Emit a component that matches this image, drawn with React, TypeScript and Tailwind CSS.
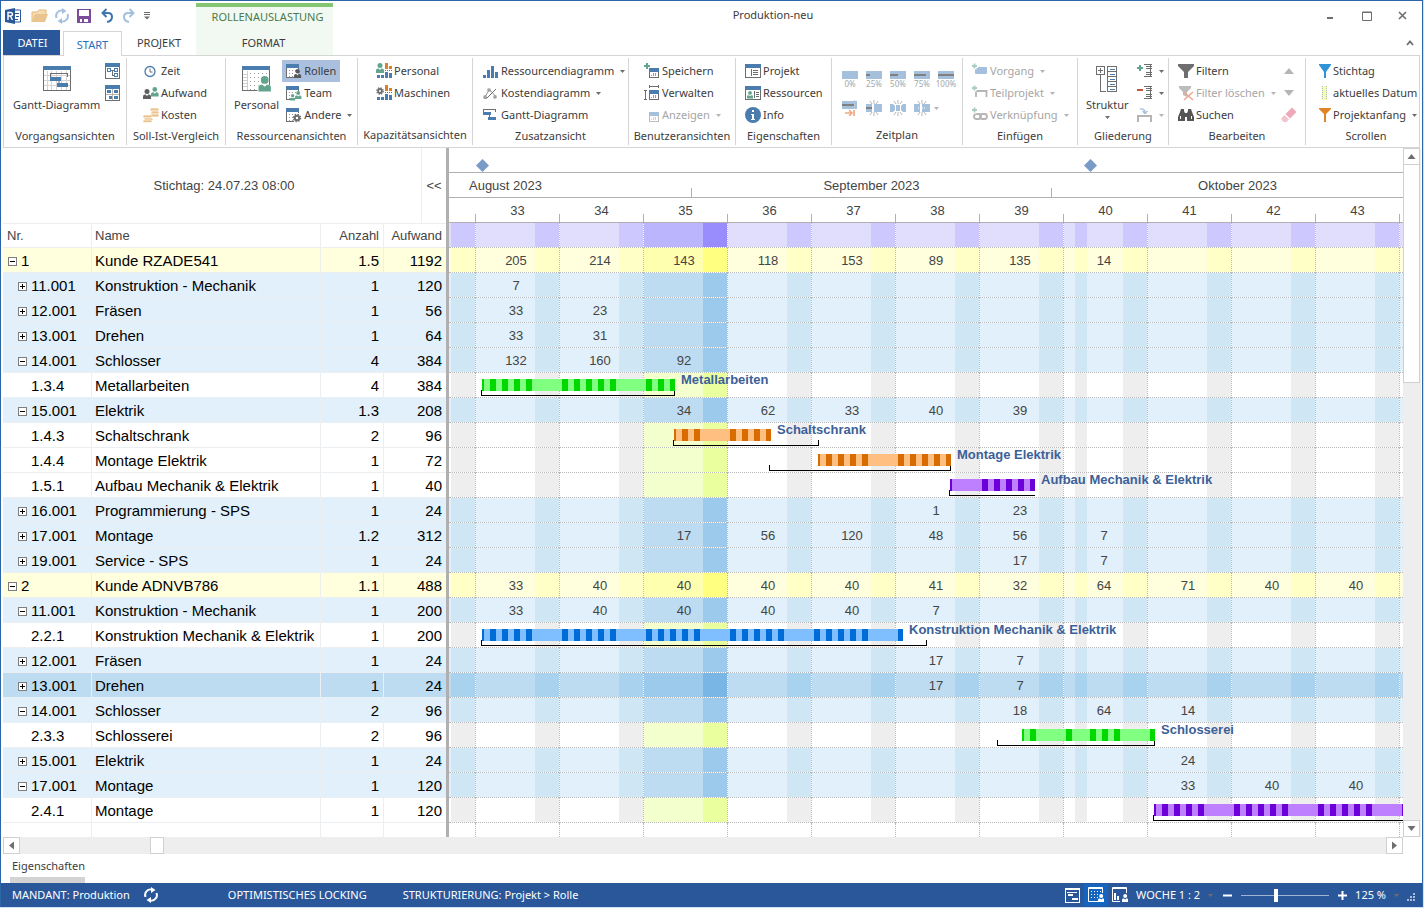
import type { ReactNode } from 'react'
import clsx from 'clsx'

const BLUE = '#4a7dae'
const PALE = '#a5c0dc'
const GRAY = '#6e6e6e'
const GREEN = '#62a58c'
const ORANGE = '#d98128'

// ---------- data ----------

type RowKind = 'sum' | 'role' | 'task' | 'selected'

interface Bar {
  from: number
  to: number
  planFrom: number
  planTo: number
  openEnd?: boolean
  light: string
  dark: string
}

interface PlanRow {
  nr: string
  name: string
  count: string
  effort: number
  kind: RowKind
  open?: boolean
  weeks?: Record<number, number>
  bar?: Bar
}

const LIME = { light: '#80ff80', dark: '#00d800' }
const AMBER = { light: '#ffbf80', dark: '#d86c00' }
const VIOLET = { light: '#bf80ff', dark: '#6c00d8' }
const AZURE = { light: '#80bfff', dark: '#006cd8' }

// bar positions are pixels from the left edge of the time axis, 12px per day
const rows: PlanRow[] = [
  { nr: '1', name: 'Kunde RZADE541', count: '1.5', effort: 1192, kind: 'sum', open: true, weeks: { 33: 205, 34: 214, 35: 143, 36: 118, 37: 153, 38: 89, 39: 135, 40: 14 } },
  { nr: '11.001', name: 'Konstruktion - Mechanik', count: '1', effort: 120, kind: 'role', weeks: { 33: 7 } },
  { nr: '12.001', name: 'Fräsen', count: '1', effort: 56, kind: 'role', weeks: { 33: 33, 34: 23 } },
  { nr: '13.001', name: 'Drehen', count: '1', effort: 64, kind: 'role', weeks: { 33: 33, 34: 31 } },
  { nr: '14.001', name: 'Schlosser', count: '4', effort: 384, kind: 'role', open: true, weeks: { 33: 132, 34: 160, 35: 92 } },
  { nr: '1.3.4', name: 'Metallarbeiten', count: '4', effort: 384, kind: 'task', bar: { from: 33, to: 226, planFrom: 32, planTo: 226, ...LIME } },
  { nr: '15.001', name: 'Elektrik', count: '1.3', effort: 208, kind: 'role', open: true, weeks: { 35: 34, 36: 62, 37: 33, 38: 40, 39: 39 } },
  { nr: '1.4.3', name: 'Schaltschrank', count: '2', effort: 96, kind: 'task', bar: { from: 225, to: 322, planFrom: 224, planTo: 370, ...AMBER } },
  { nr: '1.4.4', name: 'Montage Elektrik', count: '1', effort: 72, kind: 'task', bar: { from: 369, to: 502, planFrom: 320, planTo: 502, ...AMBER } },
  { nr: '1.5.1', name: 'Aufbau Mechanik & Elektrik', count: '1', effort: 40, kind: 'task', bar: { from: 501, to: 586, planFrom: 500, planTo: 586, openEnd: true, ...VIOLET } },
  { nr: '16.001', name: 'Programmierung - SPS', count: '1', effort: 24, kind: 'role', weeks: { 38: 1, 39: 23 } },
  { nr: '17.001', name: 'Montage', count: '1.2', effort: 312, kind: 'role', weeks: { 35: 17, 36: 56, 37: 120, 38: 48, 39: 56, 40: 7 } },
  { nr: '19.001', name: 'Service - SPS', count: '1', effort: 24, kind: 'role', weeks: { 39: 17, 40: 7 } },
  { nr: '2', name: 'Kunde ADNVB786', count: '1.1', effort: 488, kind: 'sum', open: true, weeks: { 33: 33, 34: 40, 35: 40, 36: 40, 37: 40, 38: 41, 39: 32, 40: 64, 41: 71, 42: 40, 43: 40 } },
  { nr: '11.001', name: 'Konstruktion - Mechanik', count: '1', effort: 200, kind: 'role', open: true, weeks: { 33: 33, 34: 40, 35: 40, 36: 40, 37: 40, 38: 7 } },
  { nr: '2.2.1', name: 'Konstruktion Mechanik & Elektrik', count: '1', effort: 200, kind: 'task', bar: { from: 33, to: 454, planFrom: 32, planTo: 478, ...AZURE } },
  { nr: '12.001', name: 'Fräsen', count: '1', effort: 24, kind: 'role', weeks: { 38: 17, 39: 7 } },
  { nr: '13.001', name: 'Drehen', count: '1', effort: 24, kind: 'selected', weeks: { 38: 17, 39: 7 } },
  { nr: '14.001', name: 'Schlosser', count: '2', effort: 96, kind: 'role', open: true, weeks: { 39: 18, 40: 64, 41: 14 } },
  { nr: '2.3.3', name: 'Schlosserei', count: '2', effort: 96, kind: 'task', bar: { from: 573, to: 706, planFrom: 548, planTo: 706, ...LIME } },
  { nr: '15.001', name: 'Elektrik', count: '1', effort: 24, kind: 'role', weeks: { 41: 24 } },
  { nr: '17.001', name: 'Montage', count: '1', effort: 120, kind: 'role', open: true, weeks: { 41: 33, 42: 40, 43: 40 } },
  { nr: '2.4.1', name: 'Montage', count: '1', effort: 120, kind: 'task', bar: { from: 705, to: 1034, planFrom: 704, planTo: 1034, openEnd: true, ...VIOLET } },
]

const WEEKS = [33, 34, 35, 36, 37, 38, 39, 40, 41, 42, 43]
const CURRENT_WEEK = 35
const HOLIDAY_WEEK = 40
const AXIS_START = 26
const AXIS_END = 950
const ROW_H = 25

// ---------- small drawings ----------

function Icon({ w = 16, h = 16, children }: { w?: number; h?: number; children: ReactNode }) {
  return (
    <svg width={w} height={h} viewBox={`0 0 ${w} ${h}`} fill="none" className="shrink-0" aria-hidden="true">
      {children}
    </svg>
  )
}

function Person({ x, y, color, s = 1 }: { x: number; y: number; color: string; s?: number }) {
  return (
    <g transform={`translate(${x} ${y}) scale(${s})`} fill={color}>
      <circle cx="4" cy="2.5" r="2.5" />
      <path d="M0 10V7.4Q0 5.6 2 5.6H2.6L4 7L5.4 5.6H6Q8 5.6 8 7.4V10Z" />
    </g>
  )
}

function Gear({ cx, cy, r, color }: { cx: number; cy: number; r: number; color: string }) {
  return (
    <g stroke={color}>
      <circle cx={cx} cy={cy} r={r * 0.55} strokeWidth={r * 0.5} />
      <circle cx={cx} cy={cy} r={r * 0.9} strokeWidth={r * 0.35} strokeDasharray={`${r * 0.36} ${r * 0.347}`} />
    </g>
  )
}

const Caret = ({ pale, className }: { pale?: boolean; className?: string }) => (
  <svg width="5" height="3" viewBox="0 0 5 3" className={clsx('shrink-0', className)} aria-hidden="true">
    <path d="M0 0H5L2.5 3Z" fill={pale ? '#b5b5b5' : GRAY} />
  </svg>
)

function WindowFrame({ w = 15, h = 15, x = 0, y = 0 }: { w?: number; h?: number; x?: number; y?: number }) {
  return (
    <g shapeRendering="crispEdges">
      <rect x={x + 0.5} y={y + 0.5} width={w - 1} height={h - 1} fill="#fff" stroke={GRAY} />
      <rect x={x} y={y} width={w} height={4} fill={BLUE} />
    </g>
  )
}

const GanttBig = () => (
  <Icon w={28} h={26}>
    <WindowFrame w={28} h={25} />
    <path d="M4.5 5V24M8.5 5V24M13.5 5V24M18.5 5V24M23.5 5V24M1 9.5H27M1 14.5H27M1 19.5H27" stroke="#d4d4d4" shapeRendering="crispEdges" />
    <path d="M7.5 11V7.5H24.5V11" stroke={GRAY} shapeRendering="crispEdges" />
    <rect x="7" y="11" width="11" height="4" fill={BLUE} />
    <rect x="14" y="17" width="11" height="4" fill={BLUE} />
    <path d="M16 15V17" stroke={GRAY} />
  </Icon>
)

const NetIcon = () => (
  <Icon w={15} h={16}>
    <WindowFrame h={16} />
    <g stroke={BLUE} shapeRendering="crispEdges">
      <path d="M6 7.5H9M7.5 8V12.5H9" stroke={GRAY} />
      <rect x="2.5" y="5.5" width="3" height="3" />
      <rect x="9.5" y="5.5" width="3" height="3" />
      <rect x="9.5" y="10.5" width="3" height="3" />
    </g>
  </Icon>
)

const BoardIcon = () => (
  <Icon w={15} h={16}>
    <WindowFrame h={16} />
    <g fill={BLUE} shapeRendering="crispEdges">
      <path d="M1 9.5H14M7.5 4V15" stroke="#b5b5b5" />
      <rect x="2" y="5" width="4" height="3" />
      <rect x="9" y="5" width="4" height="3" />
      <rect x="4" y="11" width="3" height="3" />
      <rect x="9" y="11" width="4" height="3" />
    </g>
  </Icon>
)

const ClockIcon = () => (
  <Icon>
    <circle cx="7" cy="8.5" r="5" stroke={BLUE} strokeWidth="1.300" />
    <path d="M7 5.5V9H9.500" stroke={GRAY} />
  </Icon>
)

const PeopleIcon = () => (
  <Icon>
    <Person x={8} y={2} color={GREEN} s={0.95} />
    <Person x={0} y={4} color="#5f5f5f" s={1} />
  </Icon>
)

const CoinsIcon = () => (
  <Icon>
    <g fill="#eac48e" stroke="#fff" strokeWidth="0.600">
      <rect x="7" y="1" width="9" height="3" rx="1.500" />
      <rect x="8" y="4" width="8" height="3" rx="1.500" />
      <rect x="7" y="7" width="9" height="3" rx="1.500" />
      <rect x="0" y="8" width="9" height="3" rx="1.500" />
      <rect x="1" y="11" width="9" height="2.500" rx="1.200" />
      <rect x="0" y="13" width="9" height="2.500" rx="1.200" />
    </g>
  </Icon>
)

const PersonalBig = () => (
  <Icon w={30} h={26}>
    <WindowFrame w={28} h={25} />
    <g stroke="#9a9a9a" shapeRendering="crispEdges">
      <path d="M5.5 5V24M1 8.5H5M1 11.5H5M1 14.5H5M1 17.5H5M1 20.5H5" stroke="#cfcfcf" />
      <path d="M8.5 7V24M12.5 7V24M16.5 7V24M20.5 7V24M24.5 7V24" strokeDasharray="1 3" />
    </g>
    <Person x={15.5} y={9} color="#fff" s={1.75} />
    <Person x={16.5} y={10} color={GREEN} s={1.55} />
  </Icon>
)

function CalendarWith({ children }: { children: ReactNode }) {
  return (
    <Icon>
      <g shapeRendering="crispEdges">
        <path d="M1 5H12V14H1Z" fill="#fff" />
        <path d="M0.5 3V14.5H8M12.5 4V6" stroke={GRAY} />
        <rect x="0" y="1" width="13" height="4" fill={BLUE} />
        <path d="M3.5 7V14M6.5 7V14M9.5 7V9" stroke="#9a9a9a" strokeDasharray="1 2" />
      </g>
      {children}
    </Icon>
  )
}

const CapacityBars = () => (
  <g shapeRendering="crispEdges">
    <path d="M1 12H4V15H1ZM5 12H8V15H5ZM9 9H12V15H9ZM13 10H16V15H13Z" fill={BLUE} />
    <path d="M9 0H12V6H9ZM13 3H16V6H13Z" fill={ORANGE} />
    <path d="M9 7.5H16" stroke={GRAY} strokeDasharray="1 1" />
  </g>
)

const BarsIcon = () => (
  <Icon>
    <path d="M0 12H3V15H0ZM4 7H7V15H4ZM8 3H11V15H8ZM12 9H15V15H12Z" fill={BLUE} shapeRendering="crispEdges" />
  </Icon>
)

const CurveIcon = () => (
  <Icon>
    <path d="M2 12L6 5L9 7L13 12" stroke="#9a9a9a" />
    <path d="M1 13H4L13 4" stroke={GRAY} />
    <g fill="#fff" stroke={GRAY} strokeWidth="0.800">
      <rect x="1" y="11" width="2" height="2" />
      <rect x="5" y="4" width="2" height="2" />
      <rect x="11" y="11" width="2" height="2" />
    </g>
  </Icon>
)

const GanttIcon = () => (
  <Icon>
    <g shapeRendering="crispEdges">
      <path d="M0.5 5V2.5H12.5V5" stroke={GRAY} />
      <rect x="0" y="5" width="8" height="3" fill={BLUE} />
      <rect x="5" y="10" width="8" height="3" fill={BLUE} />
      <path d="M6.5 8V10" stroke={GRAY} />
    </g>
  </Icon>
)

function ViewIcon({ mark, pale }: { mark?: 'plus' | 'size'; pale?: boolean }) {
  return (
    <Icon>
      <g shapeRendering="crispEdges">
        <rect x="5.5" y="5.5" width="9" height="9" stroke={pale ? '#bdbdbd' : GRAY} />
        <rect x="5" y="5" width="10" height="4" fill={pale ? PALE : BLUE} />
        <path d="M7.5 12V13M9.5 10V13M11.5 10V13" stroke={pale ? '#cfcfcf' : '#9a9a9a'} />
        {mark === 'plus' && <path d="M0 3H6M3 0V6" stroke={GREEN} strokeWidth="2" />}
        {mark === 'size' && <path d="M5.5 0V3M14.5 0V3M6 1.5H14M0 5.5H3M0 14.5H3M1.5 6V14" stroke={GRAY} />}
      </g>
    </Icon>
  )
}

const ProjectIcon = () => (
  <Icon>
    <WindowFrame w={16} h={14} y={1} />
    <path d="M6.5 6V13M8 7.5H13M8 9.5H13M8 11.5H13" stroke={GRAY} shapeRendering="crispEdges" />
  </Icon>
)

const ResourceIcon = () => (
  <Icon>
    <WindowFrame w={16} h={14} y={1} />
    <Person x={2} y={6} color={GREEN} s={0.75} />
    <path d="M9.5 6V13M11 7.5H14M11 9.5H14M11 11.5H14" stroke={GRAY} shapeRendering="crispEdges" />
  </Icon>
)

const InfoIcon = () => (
  <Icon>
    <circle cx="8" cy="8" r="8" fill={BLUE} />
    <path d="M7 7H9V13H7ZM7 3H9V5H7ZM6 7H8V8H6ZM6 12H10V13H6Z" fill="#fff" />
  </Icon>
)

function ProgressIcon({ value }: { value: number }) {
  return (
    <Icon w={16} h={8}>
      <g shapeRendering="crispEdges">
        <rect width="16" height="8" rx="1" fill={PALE} />
        <rect y="3" width={(16 * value) / 100} height="2" fill="#808080" />
      </g>
    </Icon>
  )
}

const SplitRays = () => (
  <path d="M8 0V4M4 1L6 4M12 1L10 4M8 12V16M4 15L6 12M12 15L10 12" stroke="#b5b5b5" />
)

function SplitIcon({ kind }: { kind: 'end' | 'split' | 'join' | 'move' }) {
  if (kind === 'end') {
    return (
      <Icon>
        <rect x="0" y="1" width="15" height="8" fill={PALE} />
        <path d="M0 5H12" stroke="#808080" strokeWidth="2" />
        <path d="M12.5 0V16" stroke="#d0d0d0" strokeDasharray="1 1" />
        <path d="M3 13H10M7 10L10 13L7 16M12 10V16" stroke="#f0a981" strokeWidth="1.600" />
      </Icon>
    )
  }
  return (
    <Icon>
      <path d={kind === 'join' ? 'M0 4H3L5 6V10L3 12H0ZM16 4H13L11 6V10L13 12H16ZM6 5H10V11H6Z' : 'M0 4H6V12H0ZM8 4H16V12H8Z'} fill={PALE} />
      {kind === 'split' && <path d="M0 8H6" stroke="#808080" strokeWidth="2" />}
      {kind === 'move' && <path d="M4 8H11" stroke="#fff" strokeDasharray="1 1" />}
      <SplitRays />
    </Icon>
  )
}

function InsertIcon({ kind }: { kind: 'task' | 'sub' | 'link' }) {
  return (
    <Icon>
      {kind === 'task' && <rect x="3" y="4" width="12" height="7" rx="1" fill={PALE} />}
      {kind === 'sub' && <path d="M4 12V6H14.500V12" stroke="#b5b5b5" strokeWidth="1.800" />}
      {kind === 'link' && (
        <g stroke="#b5b5b5" strokeWidth="1.800">
          <rect x="2" y="7" width="7" height="5" rx="2.500" />
          <rect x="8" y="7" width="7" height="5" rx="2.500" />
        </g>
      )}
      <path d="M-1 3H6M2.500 0V6.500" stroke="#fff" strokeWidth="4" />
      <path d="M0 3H5M2.500 0.500V5.500" stroke="#a9cdbf" strokeWidth="1.800" />
    </Icon>
  )
}

const StructureBig = () => (
  <Icon w={22} h={27}>
    <g stroke={GRAY} shapeRendering="crispEdges">
      <rect x="0.5" y="0.5" width="8" height="8" />
      <path d="M2 4.5H7M4.5 2V7M4.5 9V25.5H10" />
      <rect x="11.5" y="0.5" width="9" height="25" />
      <path d="M11 5.5H21M11 10.5H21M11 15.5H21M11 20.5H21" />
      <path d="M14 3.5H19M14 8.5H19M14 13.5H19M14 18.5H19M14 23.5H19" stroke={BLUE} />
    </g>
  </Icon>
)

function OutlineIcon({ kind }: { kind: 'plus' | 'minus' | 'bracket' }) {
  if (kind === 'bracket') {
    return (
      <Icon>
        <path d="M1 15V9H14V15" stroke="#b5b5b5" strokeWidth="2" />
        <path d="M3 2Q8 1 8 6M5.500 4L8 6.500L10.500 4" stroke={PALE} strokeWidth="1.400" />
      </Icon>
    )
  }
  return (
    <Icon>
      <g shapeRendering="crispEdges">
        <path d="M7 1.5H15M9 3.5H15M9 5.5H15M9 9.5H15M9 11.5H15M7 13.5H15M13.5 1V14" stroke={GRAY} />
        {kind === 'plus' ? (
          <path d="M0 5H6M3 2V8" stroke={GREEN} strokeWidth="2" />
        ) : (
          <path d="M0 5H6" stroke="#c0573c" strokeWidth="2" />
        )}
      </g>
    </Icon>
  )
}

const FilterIcon = () => (
  <Icon>
    <path d="M0 1H16V3L10 9V15H6V9L0 3Z" fill={GRAY} />
  </Icon>
)

const FilterClearIcon = () => (
  <Icon>
    <path d="M1 1H13V3L9 7V12L5 10V7L1 3Z" fill="#bcbcbc" />
    <path d="M6 7L15 15M15 7L6 15" stroke="#eda992" strokeWidth="1.600" />
  </Icon>
)

const BinocularsIcon = () => (
  <Icon>
    <g fill="#555">
      <path d="M3 2H6V4L7 6V14H0V10L2 5ZM13 2H10V4L9 6V14H16V10L14 5Z" />
      <rect x="6" y="6" width="4" height="4" />
    </g>
    <path d="M2.500 9V12M13.500 9V12" stroke="#fff" />
  </Icon>
)

const EraserIcon = () => (
  <Icon>
    <path d="M11 0.500L15.500 5L9 11.500L4.500 7Z" fill="#eda9b9" />
    <path d="M3.500 8L8 12.500L5.500 15H2.500L0.500 13V11Z" fill="#f3c4cf" />
  </Icon>
)

const Funnel = ({ color, h }: { color: string; h: number }) => (
  <Icon w={12} h={16}>
    <path d={`M0 1H12V2L7 ${h}V15H5V${h}L0 2Z`} fill={color} />
  </Icon>
)

const DateStripIcon = () => (
  <Icon w={12}>
    <rect x="3" y="1" width="5" height="14" fill="#efffb8" />
    <path d="M3.5 1V15M7.5 1V15" stroke="#b5b5b5" strokeDasharray="1 1" />
  </Icon>
)

const SyncIcon = ({ color }: { color: string }) => (
  <Icon>
    <g stroke={color} strokeWidth="1.900">
      <path d="M2.500 10A5.500 5.500 0 0 1 9 2.600" />
      <path d="M13.500 6A5.500 5.500 0 0 1 7 13.400" />
    </g>
    <path d="M8 0L12.500 3L8 6ZM8 16L3.500 13L8 10Z" fill={color} />
  </Icon>
)

// ---------- ribbon ----------

interface ToolProps {
  icon: ReactNode
  label: string
  caret?: boolean
  disabled?: boolean
  active?: boolean
}

function Tool({ icon, label, caret, disabled, active }: ToolProps) {
  return (
    <button
      type="button"
      disabled={disabled}
      className={clsx(
        'flex h-[22px] items-center gap-[2px] self-start whitespace-nowrap px-1',
        disabled ? 'text-[#a6a6a6]' : 'text-[#3c3c3c]',
        active && 'bg-[#abc0df]',
      )}
    >
      {icon}
      <span>{label}</span>
      {caret && <Caret pale={disabled} className="ml-1" />}
    </button>
  )
}

function BigTool({ icon, label, caret }: ToolProps) {
  return (
    <button type="button" className="flex h-[66px] flex-col items-center whitespace-nowrap pt-[6px] text-[#3c3c3c]">
      <span className="flex h-[30px] items-start">{icon}</span>
      <span className="leading-[18px]">{label}</span>
      {caret && <Caret className="mt-[2px]" />}
    </button>
  )
}

function Group({ title, className, children }: { title: string; className: string; children: ReactNode }) {
  return (
    <section className={clsx('flex shrink-0 flex-col', className)}>
      <div className="my-[2px] flex h-[87px] flex-col border-r border-[#d5d5d5]">
        <div className="flex h-[68px] items-start pt-[2px]">{children}</div>
        <h2 className="whitespace-nowrap text-center leading-[20px] text-[#3c3c3c]">{title}</h2>
      </div>
    </section>
  )
}

const Stack = ({ className, children }: { className?: string; children: ReactNode }) => (
  <div className={clsx('flex flex-col', className)}>{children}</div>
)

function Ribbon() {
  return (
    <div className="mx-[2px] flex h-[93px] overflow-hidden border border-[#d5d5d5]">
      <Group title="Vorgangsansichten" className="w-[123px]">
        <div className="ml-[9px]">
          <BigTool icon={<GanttBig />} label="Gantt-Diagramm" />
        </div>
        <div className="ml-[5px] flex flex-col gap-[6px] pt-[3px]">
          <button type="button" aria-label="Netzplan"><NetIcon /></button>
          <button type="button" aria-label="Tafel"><BoardIcon /></button>
        </div>
      </Group>
      <Group title="Soll-Ist-Vergleich" className="w-[99px]">
        <Stack className="ml-3">
          <Tool icon={<ClockIcon />} label="Zeit" />
          <Tool icon={<PeopleIcon />} label="Aufwand" />
          <Tool icon={<CoinsIcon />} label="Kosten" />
        </Stack>
      </Group>
      <Group title="Ressourcenansichten" className="w-[132px]">
        <div className="ml-2">
          <BigTool icon={<PersonalBig />} label="Personal" />
        </div>
        <Stack className="ml-[3px]">
          <Tool
            active
            icon={
              <CalendarWith>
                <Person x={8} y={6} color="#5a5a5a" s={0.9} />
              </CalendarWith>
            }
            label="Rollen"
          />
          <Tool
            icon={
              <CalendarWith>
                <Person x={4} y={9} color={GREEN} s={0.65} />
                <Person x={9} y={6} color={GREEN} s={0.8} />
              </CalendarWith>
            }
            label="Team"
          />
          <Tool
            caret
            icon={
              <CalendarWith>
                <Gear cx={11} cy={11} r={4} color="#6e6e6e" />
              </CalendarWith>
            }
            label="Andere"
          />
        </Stack>
      </Group>
      <Group title="Kapazitätsansichten" className="w-[115px]">
        <Stack className="ml-[14px]">
          <Tool
            icon={
              <Icon>
                <Person x={0} y={0} color={GREEN} s={1} />
                <CapacityBars />
              </Icon>
            }
            label="Personal"
          />
          <Tool
            icon={
              <Icon>
                <Gear cx={4} cy={6} r={3.6} color={GRAY} />
                <CapacityBars />
              </Icon>
            }
            label="Maschinen"
          />
        </Stack>
      </Group>
      <Group title="Zusatzansicht" className="w-[156px]">
        <Stack className="ml-[6px]">
          <Tool caret icon={<BarsIcon />} label="Ressourcendiagramm" />
          <Tool caret icon={<CurveIcon />} label="Kostendiagramm" />
          <Tool icon={<GanttIcon />} label="Gantt-Diagramm" />
        </Stack>
      </Group>
      <Group title="Benutzeransichten" className="w-[107px]">
        <Stack className="ml-[11px]">
          <Tool icon={<ViewIcon mark="plus" />} label="Speichern" />
          <Tool icon={<ViewIcon mark="size" />} label="Verwalten" />
          <Tool disabled caret icon={<ViewIcon pale />} label="Anzeigen" />
        </Stack>
      </Group>
      <Group title="Eigenschaften" className="w-[96px]">
        <Stack className="ml-[5px]">
          <Tool icon={<ProjectIcon />} label="Projekt" />
          <Tool icon={<ResourceIcon />} label="Ressourcen" />
          <Tool icon={<InfoIcon />} label="Info" />
        </Stack>
      </Group>
      <Group title="Zeitplan" className="w-[131px]">
        <div className="ml-[6px] flex flex-col gap-[11px] pt-[11px] text-[#a6a6a6]">
          <div className="flex">
            {[0, 25, 50, 75, 100].map(v => (
              <button key={v} type="button" disabled className="flex w-6 flex-col items-center text-[8px] leading-[10px]">
                <ProgressIcon value={v} />
                <span>{v}%</span>
              </button>
            ))}
          </div>
          <div className="flex items-center">
            {(['end', 'split', 'join', 'move'] as const).map(k => (
              <button key={k} type="button" disabled aria-label={k} className="flex w-6 justify-center">
                <SplitIcon kind={k} />
              </button>
            ))}
            <Caret pale />
          </div>
        </div>
      </Group>
      <Group title="Einfügen" className="w-[115px]">
        <Stack className="ml-[5px]">
          <Tool disabled caret icon={<InsertIcon kind="task" />} label="Vorgang" />
          <Tool disabled caret icon={<InsertIcon kind="sub" />} label="Teilprojekt" />
          <Tool disabled caret icon={<InsertIcon kind="link" />} label="Verknüpfung" />
        </Stack>
      </Group>
      <Group title="Gliederung" className="w-[91px]">
        <div className="ml-2">
          <BigTool caret icon={<StructureBig />} label="Struktur" />
        </div>
        <div className="ml-2 flex flex-col">
          {(['plus', 'minus', 'bracket'] as const).map(k => (
            <button key={k} type="button" aria-label={k} className="flex h-[22px] items-center gap-[6px]">
              <OutlineIcon kind={k} />
              <Caret pale={k === 'bracket'} />
            </button>
          ))}
        </div>
      </Group>
      <Group title="Bearbeiten" className="w-[137px]">
        <Stack className="ml-[5px]">
          <Tool icon={<FilterIcon />} label="Filtern" />
          <Tool disabled caret icon={<FilterClearIcon />} label="Filter löschen" />
          <Tool icon={<BinocularsIcon />} label="Suchen" />
        </Stack>
        <div className="ml-auto mr-2 flex flex-col">
          <button type="button" disabled aria-label="Zurück" className="flex h-[22px] items-center justify-center">
            <Icon w={10} h={6}><path d="M0 6L5 0L10 6Z" fill="#b5b5b5" /></Icon>
          </button>
          <button type="button" disabled aria-label="Weiter" className="flex h-[22px] items-center justify-center">
            <Icon w={10} h={6}><path d="M0 0L5 6L10 0Z" fill="#b5b5b5" /></Icon>
          </button>
          <button type="button" disabled aria-label="Radieren" className="flex h-[22px] items-center">
            <EraserIcon />
          </button>
        </div>
      </Group>
      <section className="flex w-[114px] flex-col pt-[2px]">
        <div className="flex h-[68px] pt-[2px]">
          <Stack className="ml-[9px]">
            <Tool icon={<Funnel color="#2f93d8" h={9} />} label="Stichtag" />
            <Tool icon={<DateStripIcon />} label="aktuelles Datum" />
            <Tool caret icon={<Funnel color="#e08326" h={7} />} label="Projektanfang" />
          </Stack>
        </div>
        <h2 className="pl-[6px] text-center leading-[20px] text-[#3c3c3c]">Scrollen</h2>
      </section>
    </div>
  )
}

function TitleBar() {
  return (
    <header>
      <div className="flex h-[29px] items-center">
        <div className="flex w-[195px] items-center gap-[6px] pl-1">
          <Icon w={17}>
            <path d="M8 2H15.500V14H8" fill="#fff" stroke="#2a579a" />
            <path d="M9 5.500H14M11 8.500H14M9 11.500H13" stroke="#2a579a" />
            <path d="M0 2L10 0V16L0 14Z" fill="#2a579a" />
            <path d="M3 12V4.500H5.500Q7.500 4.500 7.500 6.300Q7.500 8 5.500 8H3M5.300 8L7.500 12" stroke="#fff" strokeWidth="1.400" />
          </Icon>
          <button type="button" aria-label="Öffnen" className="ml-[3px]">
            <Icon w={17}>
              <path d="M1 14V4H6L8 2H15V6" fill="#f4dcb4" stroke="#e5b877" />
              <path d="M1 14L4 6H17L14 14Z" fill="#eac48e" />
            </Icon>
          </button>
          <button type="button" aria-label="Aktualisieren"><SyncIcon color={PALE} /></button>
          <button type="button" aria-label="Speichern">
            <Icon>
              <path d="M1 1H15V15H1Z" fill="#7b4b9c" />
              <path d="M3 2H13V8H3Z" fill="#fff" />
              <path d="M4 11H12V14H4Z" fill="#fff" />
              <path d="M6 11H8V14H6Z" fill="#7b4b9c" />
            </Icon>
          </button>
          <button type="button" aria-label="Rückgängig" className="ml-[2px]">
            <Icon>
              <path d="M2 5H8Q12 5 12 9Q12 13 7 14" stroke="#3f76ad" strokeWidth="2" />
              <path d="M6.500 1L2.500 5L6.500 9" stroke="#3f76ad" strokeWidth="2" />
            </Icon>
          </button>
          <button type="button" aria-label="Wiederholen">
            <Icon>
              <path d="M11 5H6Q2 5 2 9Q2 13 7 14" stroke={PALE} strokeWidth="2" />
              <path d="M7.500 1L11.500 5L7.500 9" stroke={PALE} strokeWidth="2" />
            </Icon>
          </button>
          <button type="button" aria-label="Anpassen">
            <Icon w={6} h={8}><path d="M0 0.500H6M0 2.500H6" stroke={GRAY} /><path d="M0 4.500H6L3 7.500Z" fill={GRAY} /></Icon>
          </button>
        </div>
        <div className="mt-[2px] h-[27px] w-[137px] self-start border-t-4 border-[#86c572] bg-[#f2f9f3] pl-[6px] text-center leading-[20px] text-[#4a7a4a]">
          ROLLENAUSLASTUNG
        </div>
        <h1 className="flex-1 text-center text-[#3c3c3c]">Produktion-neu</h1>
        <div className="flex w-[209px] items-center justify-end gap-[26px] pr-[15px]">
          <button type="button" aria-label="Minimieren"><Icon w={9} h={9}><path d="M0 7H6" stroke={GRAY} strokeWidth="2" /></Icon></button>
          <button type="button" aria-label="Maximieren"><Icon w={10} h={10}><path d="M0.500 1H9.500V9.500H0.500ZM0 1.500H10" stroke={GRAY} /></Icon></button>
          <button type="button" aria-label="Schließen"><Icon w={9} h={9}><path d="M1 1L8 8M8 1L1 8" stroke={GRAY} strokeWidth="1.600" /></Icon></button>
        </div>
      </div>
      <nav className="flex h-[25px] items-stretch pl-[2px] leading-[25px]">
        <button type="button" className="w-[57px] bg-[#2a579a] pl-[2px] text-white">DATEI</button>
        <button type="button" className="relative z-10 -mb-px ml-[3px] mt-px w-[59px] border border-b-0 border-[#d5d5d5] bg-white leading-[23px] text-[#2a6fbc]">
          START
        </button>
        <button type="button" className="w-[74px] text-[#3c3c3c]">PROJEKT</button>
        <button type="button" className="w-[137px] bg-[#f2f9f3] pr-[2px] text-[#3c3c3c]">FORMAT</button>
        <button type="button" aria-label="Menüband reduzieren" className="ml-auto mr-2 flex items-center">
          <Icon w={8} h={6}><path d="M1 5L4 1.500L7 5" stroke={GRAY} strokeWidth="1.800" /></Icon>
        </button>
      </nav>
    </header>
  )
}

// ---------- left table ----------

const listRowBg: Record<RowKind, string> = {
  sum: 'bg-[#ffffde]',
  role: 'bg-[#e1f0fa]',
  task: 'bg-white',
  selected: 'bg-[#bddcf2]',
}

function Expander({ open }: { open?: boolean }) {
  return (
    <button type="button" aria-label={open ? 'Zuklappen' : 'Aufklappen'}>
      <svg width="9" height="9" viewBox="0 0 9 9" shapeRendering="crispEdges" className="block">
        <rect x="0.5" y="0.5" width="8" height="8" fill="#fff" stroke="#7d7d7d" />
        <path d={open ? 'M2 4.5H7' : 'M2 4.5H7M4.5 2V7'} stroke="#000" />
      </svg>
    </button>
  )
}

function TaskList() {
  return (
    <div className="w-[443px] shrink-0">
      <div className="flex h-[75px] items-center text-[13px] text-[#444]">
        <div className="flex-1 pl-6 text-center">Stichtag: 24.07.23 08:00</div>
        <button type="button" className="h-full w-[25px] border-l border-[#eeeeee]">&lt;&lt;</button>
      </div>
      <table className="w-full table-fixed border-separate border-spacing-0 text-[15px] text-black">
        <colgroup>
          <col className="w-[88px]" />
          <col />
          <col className="w-[63px]" />
          <col className="w-[63px]" />
        </colgroup>
        <thead>
          <tr className="text-[13px] text-[#444] [&>th]:h-[25px] [&>th]:border-b [&>th]:border-t [&>th]:border-[#eeeeee] [&>th]:p-0 [&>th]:font-normal">
            <th className="text-left"><span className="pl-1">Nr.</span></th>
            <th className="border-l text-left"><span className="pl-[3px]">Name</span></th>
            <th className="border-l text-right"><span className="pr-1">Anzahl</span></th>
            <th className="border-l text-right"><span className="pr-1">Aufwand</span></th>
          </tr>
        </thead>
        <tbody>
          {rows.map((row, i) => (
            <tr
              key={i}
              className={clsx(
                '[&>td]:h-[25px] [&>td]:border-b [&>td]:border-[#ebeff2] [&>td]:p-0 [&>td]:pt-[2px] [&>td]:leading-[20px]',
                listRowBg[row.kind],
              )}
            >
              <td>
                <div
                  className={clsx(
                    'flex items-center gap-1',
                    row.kind === 'sum' && 'pl-[5px]',
                    row.kind === 'task' && 'pl-7',
                    (row.kind === 'role' || row.kind === 'selected') && 'pl-[15px]',
                  )}
                >
                  {row.kind !== 'task' && <Expander open={row.open} />}
                  {row.nr}
                </div>
              </td>
              <td className="whitespace-nowrap border-l"><span className="pl-[3px]">{row.name}</span></td>
              <td className="border-l text-right"><span className="pr-1">{row.count}</span></td>
              <td className="border-l text-right"><span className="pr-1">{row.effort}</span></td>
            </tr>
          ))}
          <tr className="[&>td]:h-[14px] [&>td]:border-[#ebeff2] [&>td]:p-0">
            <td />
            <td className="border-l" />
            <td className="border-l" />
            <td className="border-l" />
          </tr>
        </tbody>
      </table>
    </div>
  )
}

// ---------- time axis ----------

const shades: Record<RowKind | 'head', string> = {
  head: '[--day:#e0ddfd] [--off:#cdc8fd] [--now:#bbb5fd] [--nowoff:#998cfd]',
  sum: '[--day:#ffffde] [--off:#ffffc6] [--now:#ffffb0] [--nowoff:#ffff80]',
  role: '[--day:#e1f0fa] [--off:#cfe6f4] [--now:#bddcf2] [--nowoff:#9ccaec]',
  task: '[--day:#ffffff] [--off:#eeeeee] [--now:#f4ffce] [--nowoff:#eaff9e]',
  selected: '[--day:#bddcf2] [--off:#a9d2ee] [--now:#9ccaec] [--nowoff:#79b6e6]',
}

function weekBg(week: number) {
  if (week === CURRENT_WEEK) return 'bg-[linear-gradient(to_right,var(--now)_59px,var(--nowoff)_59px)]'
  if (week === HOLIDAY_WEEK) {
    return 'bg-[linear-gradient(to_right,var(--day)_11px,var(--off)_11px,var(--off)_23px,var(--day)_23px,var(--day)_59px,var(--off)_59px)]'
  }
  return 'bg-[linear-gradient(to_right,var(--day)_59px,var(--off)_59px)]'
}

function AxisRow({ kind, weeks }: { kind: RowKind | 'head'; weeks?: Record<number, number> }) {
  return (
    <tr
      className={clsx(
        '[&>td]:h-[25px] [&>td]:border-b [&>td]:border-dotted [&>td]:border-[#b9b9b9] [&>td]:bg-clip-padding [&>td]:p-0 [&>td]:pr-[3px] [&>td]:pt-[2px] [&>td]:leading-[20px]',
        shades[kind],
      )}
    >
      <td className="bg-[linear-gradient(to_right,var(--day)_2px,var(--off)_2px)]" />
      {WEEKS.map(w => (
        <td key={w} className={clsx('border-l text-center', weekBg(w))}>
          {weeks?.[w]}
        </td>
      ))}
      <td className="border-l bg-[var(--day)]" />
    </tr>
  )
}

// working hours are drawn dark, the rest of each day light
function workingBlocks(bar: Bar) {
  const blocks: { x: number; w: number }[] = []
  for (let week = 0; week <= WEEKS.length; week++) {
    for (let day = 0; day < 5; day++) {
      if (WEEKS[week] === HOLIDAY_WEEK && day === 1) continue
      const start = AXIS_START + week * 84 + day * 12 + 3
      const x = Math.max(start, bar.from)
      const end = Math.min(start + 6, bar.to)
      if (end > x) blocks.push({ x, w: end - x })
    }
  }
  return blocks
}

function TaskBar({ row, index }: { row: PlanRow; index: number }) {
  const bar = row.bar!
  const y = index * ROW_H
  const right = bar.openEnd ? '' : `V${y + 17}`
  return (
    <g>
      <path
        d={`M${bar.planFrom + 0.5} ${y + 17}V${y + 22.5}H${bar.planTo - 0.5}${right}`}
        stroke="#000"
        fill="none"
      />
      <rect x={bar.from} y={y + 6} width={bar.to - bar.from} height={12} fill={bar.light} />
      {workingBlocks(bar).map(b => (
        <rect key={b.x} x={b.x} y={y + 6} width={b.w} height={12} fill={bar.dark} />
      ))}
      {bar.to < AXIS_END && (
        <text x={bar.to + 6} y={y + 11} fill="#3c6098" className="text-[13px] font-bold">
          {row.name}
        </text>
      )}
    </g>
  )
}

function Milestone() {
  return (
    <svg width="13" height="13" viewBox="0 0 13 13" className="shrink-0" aria-hidden="true">
      <path d="M6.500 0L13 6.500L6.500 13L0 6.500Z" fill="#7a9ac8" />
    </svg>
  )
}

function Month({ label, className }: { label: string; className: string }) {
  return (
    <div className={clsx('flex h-[24px] shrink-0 items-end', className)}>
      <span className="h-[9px] w-px bg-[#b0b0b0]" />
      <span className="flex-1 text-center leading-[22px]">{label}</span>
    </div>
  )
}

function TimeAxis() {
  return (
    <div className="min-w-0 flex-1 overflow-hidden border-l-[3px] border-[#b0b0b0] text-[13px] text-[#444]">
      <div className="flex h-[25px] items-end gap-[595px] border-b border-[#b0b0b0] pl-[27px]">
        <Milestone />
        <Milestone />
      </div>
      <div className="flex h-[25px] border-b border-[#b0b0b0]">
        <Month label="August 2023" className="-ml-[130px] w-[372px]" />
        <Month label="September 2023" className="w-[360px]" />
        <Month label="Oktober 2023" className="w-[372px]" />
      </div>
      <div className="relative">
        <table className="w-[1034px] table-fixed border-separate border-spacing-0">
          <colgroup>
            <col className="w-[26px]" />
            {WEEKS.map(w => <col key={w} className="w-[84px]" />)}
            <col />
          </colgroup>
          <thead>
            <tr className="[&>th]:h-[25px] [&>th]:border-b [&>th]:border-[#b0b0b0] [&>th]:p-0 [&>th]:font-normal">
              <th />
              {WEEKS.map(w => (
                <th key={w}>
                  <div className="flex h-[24px] items-end">
                    <span className="h-[8px] w-px bg-[#b0b0b0]" />
                    <span className="flex-1 leading-[22px]">{w}</span>
                  </div>
                </th>
              ))}
              <th>
                <div className="mt-4 h-[8px] w-px bg-[#b0b0b0]" />
              </th>
            </tr>
          </thead>
          <tbody>
            <AxisRow kind="head" />
            {rows.map((row, i) => <AxisRow key={i} kind={row.kind} weeks={row.weeks} />)}
            <tr className="[&>td]:h-[14px] [&>td]:border-dotted [&>td]:border-[#b9b9b9] [&>td]:p-0">
              <td />
              {WEEKS.map(w => <td key={w} className="border-l" />)}
              <td className="border-l" />
            </tr>
          </tbody>
        </table>
        <svg className="absolute left-0 top-[50px] h-[575px] w-full" shapeRendering="crispEdges">
          {rows.map((row, i) => row.bar && <TaskBar key={i} row={row} index={i} />)}
        </svg>
      </div>
    </div>
  )
}

// ---------- scroll bars, footer ----------

function ScrollButton({ label, d }: { label: string; d: string }) {
  return (
    <button
      type="button"
      aria-label={label}
      className="flex h-[17px] w-[17px] shrink-0 items-center justify-center border border-[#d0d0d0] bg-white"
    >
      <svg width="9" height="9" viewBox="0 0 9 9" fill={GRAY}><path d={d} /></svg>
    </button>
  )
}

function StatusBar() {
  return (
    <footer className="flex h-[24px] items-center bg-[#2a579a] pl-[11px] pr-[7px] text-white">
      <span>MANDANT: Produktion</span>
      <button type="button" aria-label="Synchronisieren" className="ml-[13px]"><SyncIcon color="#fff" /></button>
      <span className="ml-[69px]">OPTIMISTISCHES LOCKING</span>
      <span className="ml-9">STRUKTURIERUNG: Projekt &gt; Rolle</span>
      <div className="ml-auto flex items-center">
        <button type="button" aria-label="Gantt" className="flex h-[22px] w-6 items-center justify-center">
          <Icon w={15} h={15}>
            <g stroke="#fff" shapeRendering="crispEdges">
              <rect x="0.500" y="0.500" width="14" height="14" />
              <path d="M0 1.500H15M2 4.500H12" />
              <path d="M3 7H8M7 11H13" strokeWidth="2" />
            </g>
          </Icon>
        </button>
        <button type="button" aria-label="Rollen" className="flex h-[22px] w-6 items-center justify-center bg-[#1565c0]">
          <Icon>
            <path d="M10 14.500H0.500V0.500H14.500V6M0 1.500H15" stroke="#fff" />
            <path d="M3.500 4V13M6.500 4V13M9.500 4V13M12.500 4V6" stroke="#fff" strokeDasharray="1 2" />
            <Person x={10} y={7} color="#fff" s={0.8} />
          </Icon>
        </button>
        <button type="button" aria-label="Auslastung" className="flex h-[22px] w-6 items-center justify-center">
          <Icon>
            <path d="M8 14.500H0.500V0.500H14.500V6M0 1.500H15" stroke="#fff" />
            <path d="M3 6V13M6 9V13" stroke="#fff" strokeWidth="2" />
            <Person x={10} y={7} color="#fff" s={0.8} />
          </Icon>
        </button>
        <button type="button" className="ml-1 flex items-center gap-2 whitespace-nowrap">
          WOCHE 1 : 2 <Caret />
        </button>
        <button type="button" aria-label="Verkleinern" className="ml-[10px]">
          <Icon w={9} h={9}><path d="M0 4.500H9" stroke="#fff" strokeWidth="2" /></Icon>
        </button>
        <input
          type="range"
          aria-label="Zoom"
          defaultValue={39}
          className="mx-[9px] h-4 w-[88px] appearance-none bg-[linear-gradient(#9fb4d4,#9fb4d4)] bg-[length:100%_1px] bg-center bg-no-repeat [&::-webkit-slider-thumb]:h-[13px] [&::-webkit-slider-thumb]:w-1 [&::-webkit-slider-thumb]:appearance-none [&::-webkit-slider-thumb]:bg-white"
        />
        <button type="button" aria-label="Vergrößern">
          <Icon w={9} h={9}><path d="M0 4.500H9M4.500 0V9" stroke="#fff" strokeWidth="2" /></Icon>
        </button>
        <button type="button" className="ml-2 flex items-center gap-2 whitespace-nowrap">
          125 % <Caret />
        </button>
        <svg width="8" height="8" viewBox="0 0 8 8" className="ml-2 mt-1" fill="#a9bbd8" aria-hidden="true">
          <path d="M6 0H8V2H6ZM3 3H5V5H3ZM6 3H8V5H6ZM0 6H2V8H0ZM3 6H5V8H3ZM6 6H8V8H6Z" />
        </svg>
      </div>
    </footer>
  )
}

export default function App() {
  return (
    <div className="min-h-screen bg-[#cfe2f5] pb-px pr-px font-['Noto_Sans',sans-serif] text-[11px]">
      <div className="border-l border-r border-t border-[#2a66a8] bg-white">
        <TitleBar />
        <Ribbon />
        <main className="flex pl-[2px] pr-px font-['Liberation_Sans',Arial,sans-serif]">
          <TaskList />
          <TimeAxis />
          <div className="flex w-[18px] flex-col bg-[#eeeeee] pr-px">
            <ScrollButton label="Nach oben" d="M0.500 7L4.500 2L8.500 7Z" />
            <div className="h-[218px] border border-t-0 border-[#d0d0d0] bg-white" />
            <div className="mt-auto">
              <ScrollButton label="Nach unten" d="M0.500 2L4.500 7L8.500 2Z" />
            </div>
          </div>
        </main>
        <div className="ml-[2px] mr-[19px] flex h-[17px] bg-[#eeeeee]">
          <ScrollButton label="Nach links" d="M7 0.500L2 4.500L7 8.500Z" />
          <div className="ml-[130px] w-[14px] border border-[#d0d0d0] bg-white" />
          <div className="ml-auto">
            <ScrollButton label="Nach rechts" d="M2 0.500L7 4.500L2 8.500Z" />
          </div>
        </div>
        <div className="flex h-[29px] px-[9px]">
          <button type="button" className="border-b-[6px] border-[#d3d3d3] pl-[2px] leading-[23px] text-[#3c3c3c]">
            Eigenschaften
          </button>
        </div>
        <StatusBar />
      </div>
    </div>
  )
}
